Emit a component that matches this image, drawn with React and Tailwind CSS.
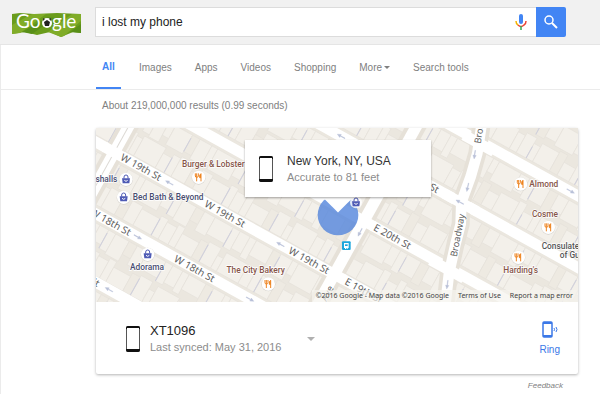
import { useState } from "react";

const tabs = ["Images", "Apps", "Videos", "Shopping"];

// The street grid is drawn straight and turned by 29 degrees as a whole.
const streets = [-520, -332, -143, 40, 228, 408];
const avenues = [103, 858];

const lotWidths = [34, 22, 58, 26, 40, 20, 74, 30, 24, 46, 28, 36, 62, 24];
const lotDepths = [66, 58, 68, 50, 62, 68, 44, 64, 56];

const streetLabels = [
  { text: "W 19th St", x: 128, y: 51 },
  { text: "W 19th St", x: 416, y: 51 },
  { text: "W 19th St", x: 704, y: 51 },
  { text: "E 19th St", x: 897, y: 51 },
  { text: "W 18th St", x: 128, y: 239 },
  { text: "W 18th St", x: 416, y: 239 },
  { text: "W 17th St", x: 120, y: 419 },
  { text: "E 20th St", x: 894, y: -133 },
  { text: "E 21st St", x: 890, y: -321 },
];

const streetArrows = [
  { x: 292, y: 40, turn: 180 },
  { x: 673, y: 40, turn: 180 },
  { x: 288, y: 228, turn: 0 },
  { x: 673, y: 228, turn: 0 },
  { x: 289, y: 408, turn: 180 },
  { x: 675, y: -332, turn: 180 },
  { x: 1082, y: -332, turn: 180 },
  { x: 1357, y: -522, turn: 0 },
];

const avenueArrows = [
  { x: 808, y: 325, turn: 118 },
  { x: 1152, y: 92, turn: 98 },
  { x: 1131, y: 190, turn: 102 },
  { x: 1070, y: 482, turn: 98 },
];

const places = [
  { name: "Burger & Lobster", kind: "food", x: 324, y: 160, tx: 368, ty: 129, anchor: "middle" },
  { name: "The City Bakery", kind: "food", x: 533, y: 480, tx: 495, ty: 447, anchor: "middle" },
  { name: "Almond", kind: "food", x: 1290, y: 180, tx: 1316, ty: 188, anchor: "start" },
  { name: "Cosme", kind: "food", x: 1373, y: 310, tx: 1363, ty: 278, anchor: "middle" },
  { name: "Harding's", kind: "food", x: 1283, y: 400, tx: 1290, ty: 446, anchor: "middle" },
  { name: "Marshalls", kind: "shop", x: 106, y: 166, tx: 80, ty: 173, anchor: "end" },
  { name: "Bed Bath & Beyond", kind: "shop", x: 99, y: 220, tx: 126, ty: 228, anchor: "start" },
  { name: "Adorama", kind: "shop", x: 171, y: 391, tx: 169, ty: 437, anchor: "middle" },
];

const buildLots = () => {
  const lots = [];
  streets.slice(0, -1).concat([-708, 408]).forEach((street, row) => {
    [0, 1].forEach((side) => {
      let x = -120 - row * 17 - side * 9;
      let i = row * 3 + side * 5;
      while (x < 1600) {
        const width = lotWidths[i % lotWidths.length];
        const depth = lotDepths[i % lotDepths.length];
        lots.push({
          x,
          y: side === 0 ? street + 24 : street + 164 - depth,
          width,
          depth,
          shade: i % 7 === 3,
          wall: i % 5 === 2,
        });
        x += width;
        i += 1;
      }
    });
  });
  return lots;
};

const lots = buildLots();

const Arrow = ({ x, y, turn }) => (
  <path
    d="M-13 -1H2V-5L13 0L2 5V1H-13Z"
    transform={`translate(${x} ${y}) rotate(${turn})`}
    fill="#b9c1d8"
    stroke="#b9c1d8"
    strokeWidth="1"
  />
);

const ShopIcon = () => (
  <>
    <path d="M-12 -3H12L10 12H-10Z" fill="#4f5bb5" />
    <path d="M-6 -2V-7A6 6 0 0 1 6 -7V-2" fill="none" stroke="#4f5bb5" strokeWidth="3" />
    <path d="M-5 3Q0 9 5 3" fill="none" stroke="#fff" strokeWidth="3" />
  </>
);

const FoodIcon = () => (
  <g fill="none" stroke="#ee8420" strokeWidth="3">
    <path d="M-10 -12V-4Q-10 0 -6 0Q-1 0 -1 -4V-12M-6 -12V12" />
    <path d="M7 12V-11Q2 -9 3 1H7" fill="#ee8420" />
  </g>
);

const CityMap = () => (
  <svg
    className="block h-full w-full"
    viewBox="16 12 1446 522"
    preserveAspectRatio="xMidYMid slice"
    role="img"
    aria-label="Map of Manhattan around Broadway and 20th St"
  >
    <rect x="-500" y="-100" width="2500" height="800" fill="#ebe7df" />
    <g transform="rotate(29)">
      {lots.map((lot, i) => (
        <g key={i}>
          <rect
            x={lot.x}
            y={lot.y}
            width={lot.width}
            height={lot.depth}
            fill={lot.shade ? "#eeeae2" : "#f3f0ea"}
            stroke="#e5e1da"
            strokeWidth="2"
          />
          {lot.wall && (
            <path d={`M${lot.x} ${lot.y + 10}V${lot.y + lot.depth}`} stroke="#cfcfdc" strokeWidth="3" />
          )}
        </g>
      ))}
      {streets.map((y) => (
        <path key={y} d={`M-300 ${y}H1800`} stroke="#fff" strokeWidth="32" />
      ))}
      {avenues.map((x) => (
        <g key={x}>
          <path d={`M${x} -900V800`} stroke="#e6e1d8" strokeWidth="58" />
          <path d={`M${x} -900V800`} stroke="#fff" strokeWidth="34" />
        </g>
      ))}
      <path d="M103 -900V800" stroke="#dcd9d4" strokeWidth="3" />
      {streets.map((y) => (
        <path key={y} d={`M70 ${y}H136M826 ${y}H890`} stroke="#fff" strokeWidth="32" />
      ))}
    </g>
    <g fill="none" strokeLinejoin="round">
      <path d="M1176 -20L1160 88L1140 158L1112 235L1110 300L1095 358L1075 448L1062 560" stroke="#e6e1d8" strokeWidth="54" />
      <path d="M1176 -20L1160 88L1140 158L1112 235L1110 300L1095 358L1075 448L1062 560" stroke="#fff" strokeWidth="32" />
      <path d="M1120 33L1210 83M1060 208L1160 263M1020 408L1120 463" stroke="#fff" strokeWidth="32" />
    </g>
    <g transform="rotate(29)">
      {streetArrows.map((arrow) => (
        <Arrow key={`${arrow.x} ${arrow.y}`} {...arrow} />
      ))}
      <g className="font-['Noto_Sans',sans-serif] text-[30px]" fill="#606060" stroke="#fff" strokeWidth="4" paintOrder="stroke">
        {streetLabels.map((label) => (
          <text key={`${label.x} ${label.y}`} x={label.x} y={label.y}>
            {label.text}
          </text>
        ))}
      </g>
    </g>
    {avenueArrows.map((arrow) => (
      <Arrow key={arrow.y} {...arrow} />
    ))}
    <g className="font-['Noto_Sans',sans-serif] text-[28px]" fill="#606060" stroke="#fff" strokeWidth="4" paintOrder="stroke">
      <text transform="translate(1098 400) rotate(-79)">Broadway</text>
      <text transform="translate(1170 60) rotate(-81)">Broadway</text>
      <text transform="translate(730 492) rotate(-61)" textAnchor="end">5th Ave</text>
    </g>

    {places.map((place) => (
      <g key={place.name}>
        <circle cx={place.x} cy={place.y + 1} r="21" fill="#d5d2cc" />
        <circle cx={place.x} cy={place.y} r="20" fill="#fff" />
        <g transform={`translate(${place.x} ${place.y})`}>
          {place.kind === "food" ? <FoodIcon /> : <ShopIcon />}
        </g>
        <text
          x={place.tx}
          y={place.ty}
          textAnchor={place.anchor}
          className="font-[Roboto,sans-serif] text-[25px] font-medium"
          fill={place.kind === "food" ? "#865548" : "#484d70"}
          stroke="#fff"
          strokeWidth="4"
          paintOrder="stroke"
        >
          {place.name}
        </text>
      </g>
    ))}
    <g className="font-[Roboto,sans-serif] text-[25px] font-medium" fill="#555" stroke="#fff" strokeWidth="4" paintOrder="stroke">
      <text x="1353" y="375">Consulate</text>
      <text x="1407" y="402">of Guatemala</text>
    </g>

    <circle cx="742" cy="273" r="61" fill="#5284dc" fillOpacity="0.8" />
    <circle cx="796" cy="235" r="18" fill="#fff" fillOpacity="0.8" />
    <g transform="translate(796 235)">
      <ShopIcon />
    </g>
    <g transform="translate(767 365)">
      <rect x="-13" y="-13" width="26" height="26" rx="3" fill="#1ba6dc" />
      <path d="M-7 -8H7V7H4V10H1V7H-1V10H-4V7H-7Z" fill="#fff" />
      <path d="M-4 -4H4V1H-4Z" fill="#1ba6dc" />
    </g>
  </svg>
);

const PhoneIcon = () => (
  <svg className="h-[26px] w-[14px] shrink-0" viewBox="0 0 14 26" aria-hidden="true">
    <rect width="14" height="26" rx="2" fill="#555" />
    <path d="M0 3V2Q0 0 2 0H12Q14 0 14 2V3ZM0 23V24Q0 26 2 26H12Q14 26 14 24V23Z" fill="#111" />
    <rect x="1" y="2" width="12" height="21" fill="#fff" />
  </svg>
);

const Logo = () => (
  <svg className="h-[30px] w-[70px]" viewBox="0 -6 70 30" role="img" aria-label="Google">
    <path d="M0 1L8 0L22 1L45 0L69 1V20L61 19L49 24L38 19L25 22L13 19L0 21Z" fill="#6a9c1c" />
    <path d="M0 12L20 1H34L8 20L0 21ZM36 19L60 1H69V8L52 23L49 24Z" fill="#80ac28" />
    <path d="M10 19L36 4L43 5L20 21ZM58 19L69 11V20Z" fill="#598f18" />
    <g className="font-[Lato,sans-serif] text-[19px]" fill="#fff">
      <text x="4" y="15">Go</text>
      <text x="40" y="15">gle</text>
    </g>
    <circle cx="35" cy="10" r="5" fill="#fff" />
    <path d="M35 7L38 9L37 13H33L32 9Z" fill="#222" />
    <path d="M31 5L33 6L31 8ZM39 5L37 6L39 8Z" fill="#333" />
  </svg>
);

const MicIcon = () => (
  <svg className="h-4 w-3" viewBox="0 0 12 16" aria-hidden="true">
    <rect x="4" width="4" height="10" rx="2" fill="#4285f4" />
    <path d="M1 7Q1 10 3 11" fill="none" stroke="#f4b400" strokeWidth="1.5" />
    <path d="M3 11Q6 14 9 11Q11 10 11 7" fill="none" stroke="#ea4335" strokeWidth="1.5" />
    <path d="M6 12V16" stroke="#34a853" strokeWidth="1.5" />
  </svg>
);

const SearchIcon = () => (
  <svg className="size-[14px]" viewBox="0 0 14 14" fill="none" stroke="#fff" aria-hidden="true">
    <circle cx="5" cy="5" r="4" strokeWidth="1.5" />
    <path d="M8 8L13 13" strokeWidth="2" />
  </svg>
);

const RingIcon = () => (
  <svg className="h-[17px] w-4" viewBox="0 0 16 17" fill="none" stroke="#3b78e7" aria-hidden="true">
    <rect x="1" y="1" width="9" height="15" rx="1" strokeWidth="1.5" />
    <path d="M1 2H10M1 15H10" strokeWidth="2" />
    <path d="M12 7Q13 8.500 12 10M14 6Q16 8.500 14 11" />
  </svg>
);

export default function App() {
  const [query, setQuery] = useState("i lost my phone");

  return (
    <div className="min-h-screen bg-white font-['Liberation_Sans',Arial,sans-serif] text-[#808080]">
      <header className="flex h-[45px] items-center border-b border-[#e5e5e5] bg-[#f1f1f1] pl-3 pr-[34px]">
        <a href="#home" className="w-[83px] shrink-0">
          <Logo />
        </a>
        <form className="flex h-[30px] max-w-[720px] grow" onSubmit={(e) => e.preventDefault()}>
          <div className="flex grow items-center border border-r-0 border-[#dcdcdc] bg-white pl-[6px] pr-[9px]">
            <input
              type="text"
              aria-label="Search"
              className="min-w-0 grow bg-transparent text-xs text-[#222] outline-none"
              value={query}
              onChange={(e) => setQuery(e.target.value)}
            />
            <button type="button" aria-label="Search by voice">
              <MicIcon />
            </button>
          </div>
          <button
            type="submit"
            aria-label="Search"
            className="flex w-[30px] items-center justify-center rounded-r-xs bg-[#4285f4]"
          >
            <SearchIcon />
          </button>
        </form>
      </header>

      <div className="border-l border-[#ebebeb]">
        <nav className="flex h-[45px] items-stretch gap-[18px] border-b border-[#ebebeb] pl-[95px] text-[10px]">
          <a
            href="#all"
            className="flex w-[25px] items-center justify-center border-b-2 border-[#4285f4] font-bold text-[#4285f4]"
          >
            All
          </a>
          <div className="flex gap-[23px]">
            {tabs.map((tab) => (
              <a key={tab} href={`#${tab.toLowerCase()}`} className="flex items-center">
                {tab}
              </a>
            ))}
            <button type="button" className="flex items-center gap-[2px]">
              More
              <span className="border-x-[3px] border-t-[3px] border-x-transparent border-t-current" />
            </button>
            <button type="button">Search tools</button>
          </div>
        </nav>

        <main className="pl-[95px] pr-[22px]">
          <p className="pl-[6px] pt-2 text-[10px] leading-4">About 219,000,000 results (0.99 seconds)</p>

          <section className="mt-[14px] rounded-xs bg-white shadow-[0_1px_3px_rgba(0,0,0,0.3)]">
            <div className="relative h-[174px] overflow-hidden">
              <CityMap />
              <div className="absolute left-1/2 top-3 ml-px w-[186px] -translate-x-1/2">
                <div className="absolute -bottom-[11px] left-[82px] size-[22px] rotate-45 bg-white" />
                <div className="relative flex h-[57px] items-center gap-[14px] bg-white pl-[14px] shadow-[0_1px_2px_rgba(0,0,0,0.35)]">
                  <PhoneIcon />
                  <div>
                    <p className="text-xs leading-4 text-[#333]">New York, NY, USA</p>
                    <p className="text-[11px] leading-4 text-[#8c8c8c]">Accurate to 81 feet</p>
                  </div>
                </div>
              </div>
              <div className="absolute bottom-0 right-0 flex h-3 items-center gap-[9px] bg-[#f5f3ee]/70 pl-1 pr-[5px] font-['Noto_Sans',sans-serif] text-[7px] text-[#444]">
                <span>©2016 Google - Map data ©2016 Google</span>
                <a href="#terms">Terms of Use</a>
                <a href="#report">Report a map error</a>
              </div>
            </div>

            <div className="flex h-[72px] items-center pl-[30px] pr-[18px] pt-[2px]">
              <PhoneIcon />
              <div className="ml-[10px]">
                <h2 className="text-[13px] leading-4 text-[#222]">XT1096</h2>
                <p className="text-[11px] leading-4 text-[#8c8c8c]">Last synced: May 31, 2016</p>
              </div>
              <button type="button" aria-label="Choose a device" className="ml-[26px] text-[#b0b0b0]">
                <span className="block border-x-4 border-t-4 border-x-transparent border-t-current" />
              </button>
              <button type="button" className="ml-auto flex flex-col items-center gap-1 text-[10px] leading-4 text-[#3b78e7]">
                <RingIcon />
                Ring
              </button>
            </div>
          </section>

          <p className="pr-[15px] pt-1 text-right text-[8px] leading-4 italic">
            <a href="#feedback">Feedback</a>
          </p>
        </main>
      </div>
    </div>
  );
}
